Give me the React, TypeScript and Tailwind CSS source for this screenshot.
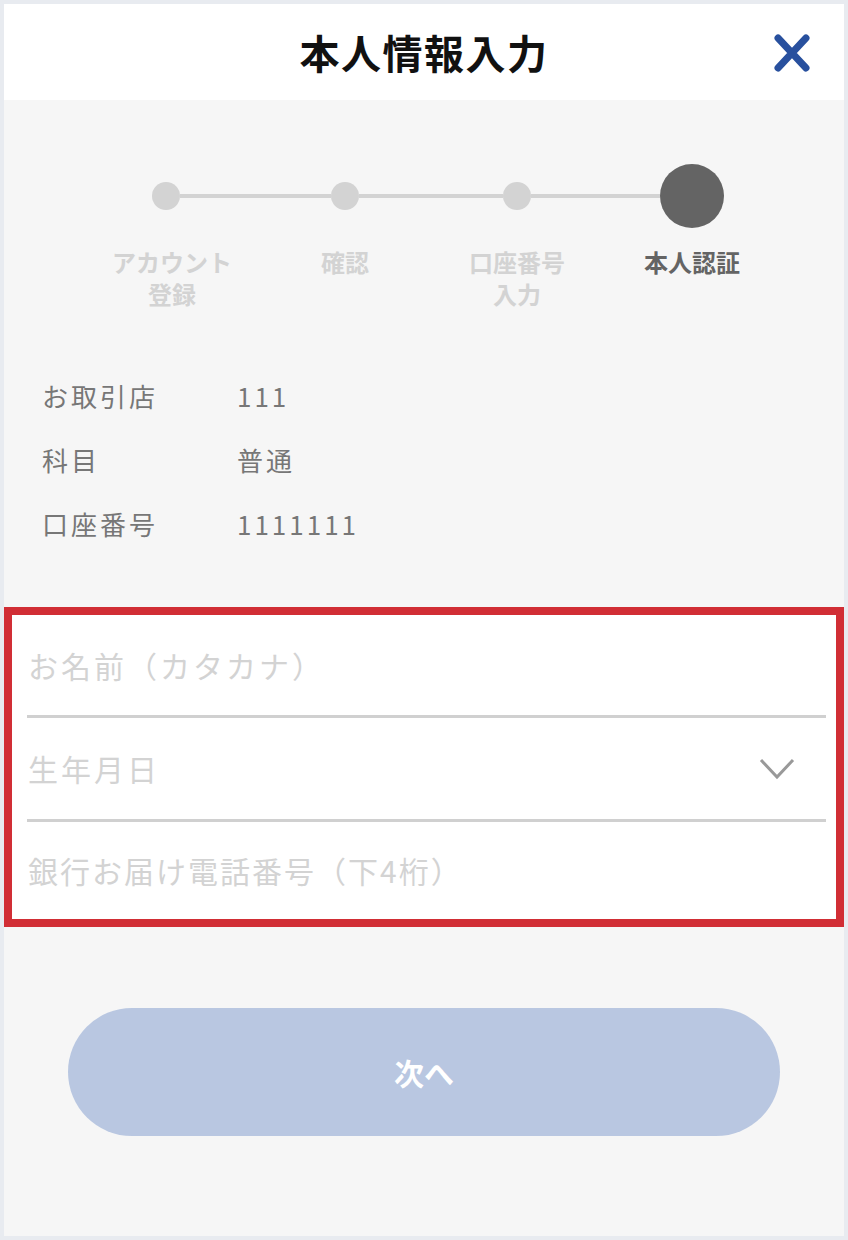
import React from "react";

const font = { fontFamily: '"Noto Sans CJK JP", "Noto Sans", sans-serif' };

const steps = [
  { label: ["アカウント", "登録"], active: false },
  { label: ["確認"], active: false },
  { label: ["口座番号", "入力"], active: false },
  { label: ["本人認証"], active: true },
];

const rows = [
  { label: "お取引店", value: "111" },
  { label: "科目", value: "普通" },
  { label: "口座番号", value: "1111111" },
];

const App: React.FC = () => {
  return (
    <div
      className="w-[848px] h-[1240px] bg-[#e8ebf0] p-[4px]"
      style={font}
    >
      <div className="flex flex-col h-full bg-[#f6f6f6]">
        {/* header */}
        <div className="relative flex items-center justify-center h-[96px] bg-white">
          <h1 className="text-[40px] font-bold tracking-[1.5px] text-[#111] leading-none">本人情報入力</h1>
          <button className="absolute right-[32px] top-[29px] w-[40px] h-[40px] flex items-center justify-center">
            <svg width="38" height="38" viewBox="0 0 38 38">
              <path
                d="M5 4 L33 34 M33 4 L5 34"
                stroke="#28509e"
                strokeWidth="7"
                strokeLinecap="round"
                fill="none"
              />
            </svg>
          </button>
        </div>

        {/* stepper */}
        <div className="mt-[64px] h-[64px] flex items-center pl-[148px]">
          <div className="w-[28px] h-[28px] rounded-full bg-[#d3d3d3]" />
          <div className="w-[151px] h-[4px] bg-[#d3d3d3]" />
          <div className="w-[28px] h-[28px] rounded-full bg-[#d3d3d3]" />
          <div className="w-[144px] h-[4px] bg-[#d3d3d3]" />
          <div className="w-[28px] h-[28px] rounded-full bg-[#d3d3d3]" />
          <div className="w-[129px] h-[4px] bg-[#d3d3d3]" />
          <div className="w-[64px] h-[64px] rounded-full bg-[#646464]" />
        </div>
        <div className="mt-[18px] flex pl-[98px]">
          {steps.map((s, i) => (
            <div
              key={i}
              className={
                "w-[140px] text-center text-[24px] font-bold leading-[32px] " +
                (s.active ? "text-[#646464]" : "text-[#d3d3d3]") +
                (i === 1 ? " ml-[33px]" : i === 2 ? " ml-[32px]" : i === 3 ? " ml-[35px]" : "")
              }
            >
              {s.label.map((l) => (
                <div key={l}>{l}</div>
              ))}
            </div>
          ))}
        </div>

        {/* account info */}
        <div className="mt-[53px] pl-[38px]">
          {rows.map((r) => (
            <div key={r.label} className="flex items-center h-[64px] text-[26px] tracking-[3px] text-[#777]">
              <div className="w-[195px]">{r.label}</div>
              <div>{r.value}</div>
            </div>
          ))}
        </div>

        {/* form */}
        <div className="mt-[52px] border-[8px] border-[#d12e35] bg-white pl-[15px] pr-[10px]">
          <div className="h-[100px] flex items-center">
            <input
              className="w-full pl-[1px] text-[30px] tracking-[3px] outline-none bg-transparent placeholder:text-[#d3d3d3]"
              placeholder="お名前（カタカナ）"
            />
          </div>
          <div className="h-[3px] bg-[#d0d0d0]" />
          <div className="h-[101px] flex items-center justify-between">
            <span className="pl-[1px] text-[30px] tracking-[3px] text-[#d3d3d3]">生年月日</span>
            <svg width="36" height="24" viewBox="0 0 36 24" className="mr-[31px]">
              <path d="M2 3 L18 20 L34 3" stroke="#999" strokeWidth="3" fill="none" />
            </svg>
          </div>
          <div className="h-[3px] bg-[#d0d0d0]" />
          <div className="h-[97px] flex items-center">
            <input
              className="w-full pl-[1px] text-[30px] tracking-[2px] outline-none bg-transparent placeholder:text-[#d3d3d3]"
              placeholder="銀行お届け電話番号（下4桁）"
            />
          </div>
        </div>

        {/* next */}
        <button className="mt-[81px] mx-auto w-[712px] h-[128px] rounded-full bg-[#b9c7e1] text-white text-[30px] font-bold">
          次へ
        </button>
      </div>
    </div>
  );
};

export default App;
